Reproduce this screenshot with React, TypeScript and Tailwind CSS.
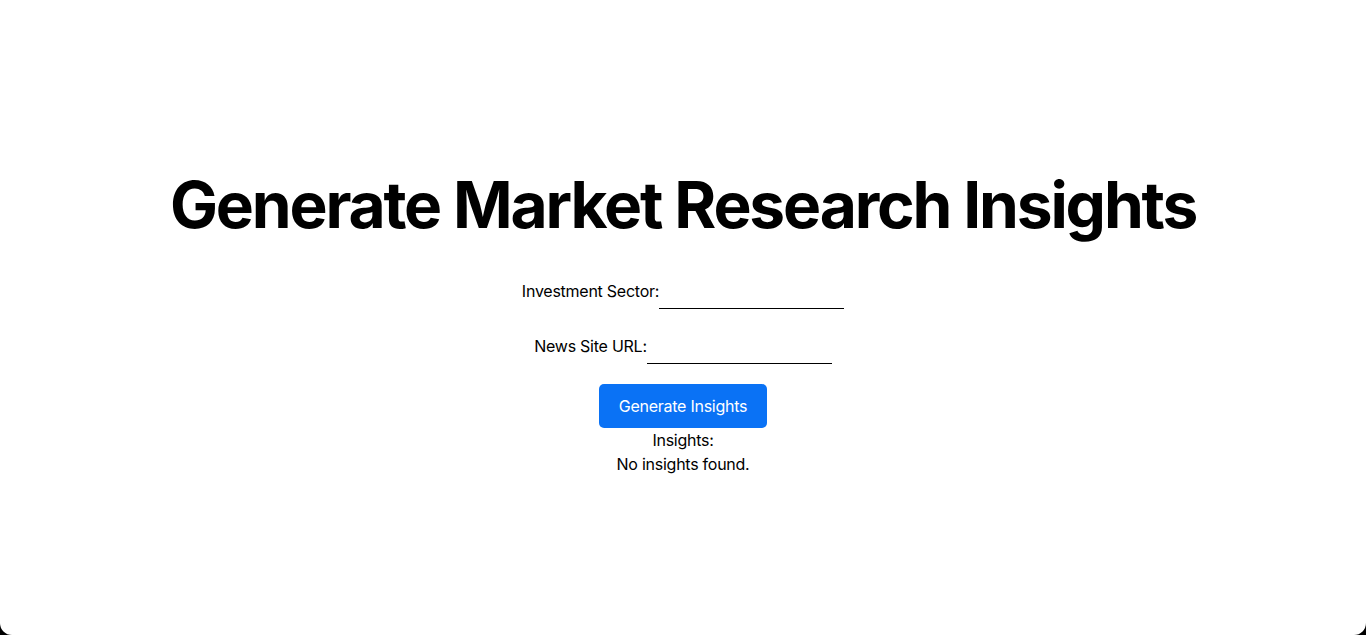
import { useState } from "react";

export default function App() {
  const [sector, setSector] = useState("");
  const [url, setUrl] = useState("");
  const [insights] = useState<string[]>([]);

  return (
    <div className="bg-black min-h-screen" style={{ fontFamily: "Inter, 'Liberation Sans', sans-serif" }}>
      <div className="bg-white h-[635px] rounded-b-[12px] flex flex-col items-center pt-[167px] text-black tracking-[-0.25px]">
        <h1 className="text-[64px] font-bold leading-[1.2] tracking-[-2.15px]">Generate Market Research Insights</h1>

        <div className="flex items-start mt-[35px]">
          <label className="text-base leading-6">Investment Sector:</label>
          <input
            value={sector}
            onChange={(e) => setSector(e.target.value)}
            className="w-[185px] h-[30px] border-b border-black outline-none"
          />
        </div>

        <div className="flex items-start mt-[25px]">
          <label className="text-base leading-6">News Site URL:</label>
          <input
            value={url}
            onChange={(e) => setUrl(e.target.value)}
            className="w-[185px] h-[30px] border-b border-black outline-none"
          />
        </div>

        <button className="mt-[20px] w-[168px] h-[44px] bg-[#0a72f5] text-white text-base rounded-[5px]">
          Generate Insights
        </button>

        <div className="text-base leading-6 text-center">
          <p>Insights:</p>
          {insights.length === 0 ? <p>No insights found.</p> : insights.map((i) => <p key={i}>{i}</p>)}
        </div>
      </div>
    </div>
  );
}
